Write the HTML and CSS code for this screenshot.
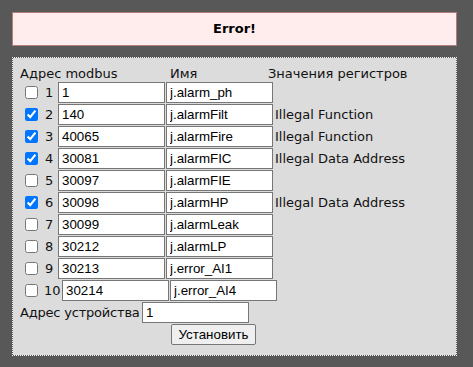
FILE: index.html
```html
<!DOCTYPE html>
<html>
<head>
<meta charset="utf-8">
<link rel="stylesheet" href="styles.css">
</head>
<body>
<div class="error">Error!</div>
<form class="panel">
  <div class="head">
    <span class="h1">Адрес modbus</span>
    <span class="h2">Имя</span>
    <span class="h3">Значения регистров</span>
  </div>
  <div class="row"><input type="checkbox" class="cb"><span class="num">1</span><input class="tx" value="1"><input class="tx" value="j.alarm_ph"><span class="val"></span></div>
  <div class="row"><input type="checkbox" class="cb" checked><span class="num">2</span><input class="tx" value="140"><input class="tx" value="j.alarmFilt"><span class="val">Illegal Function</span></div>
  <div class="row"><input type="checkbox" class="cb" checked><span class="num">3</span><input class="tx" value="40065"><input class="tx" value="j.alarmFire"><span class="val">Illegal Function</span></div>
  <div class="row"><input type="checkbox" class="cb" checked><span class="num">4</span><input class="tx" value="30081"><input class="tx" value="j.alarmFIC"><span class="val">Illegal Data Address</span></div>
  <div class="row"><input type="checkbox" class="cb"><span class="num">5</span><input class="tx" value="30097"><input class="tx" value="j.alarmFIE"><span class="val"></span></div>
  <div class="row"><input type="checkbox" class="cb" checked><span class="num">6</span><input class="tx" value="30098"><input class="tx" value="j.alarmHP"><span class="val">Illegal Data Address</span></div>
  <div class="row"><input type="checkbox" class="cb"><span class="num">7</span><input class="tx" value="30099"><input class="tx" value="j.alarmLeak"><span class="val"></span></div>
  <div class="row"><input type="checkbox" class="cb"><span class="num">8</span><input class="tx" value="30212"><input class="tx" value="j.alarmLP"><span class="val"></span></div>
  <div class="row"><input type="checkbox" class="cb"><span class="num">9</span><input class="tx" value="30213"><input class="tx" value="j.error_AI1"><span class="val"></span></div>
  <div class="row"><input type="checkbox" class="cb"><span class="num wide">10</span><input class="tx" value="30214"><input class="tx" value="j.error_AI4"><span class="val"></span></div>
  <div class="row dev"><span class="devlabel">Адрес устройства</span><input class="tx" value="1"></div>
  <div class="btnrow"><button type="button" class="btn">Установить</button></div>
</form>
</body>
</html>
```
FILE: styles.css
```css
html, body {
  margin: 0;
  padding: 0;
}
body {
  background: #585858;
  padding: 12px 16px 12px 12px;
  font-family: "DejaVu Sans", Verdana, sans-serif;
  font-size: 13px;
  color: #111;
}
.error {
  box-sizing: border-box;
  width: 445px;
  height: 34px;
  background: #ffeded;
  border: 1px solid #b07c7c;
  font-weight: bold;
  font-size: 13px;
  text-align: center;
  line-height: 32px;
  color: #000;
}
.panel {
  box-sizing: border-box;
  width: 445px;
  margin: 11px 0 0 0;
  padding: 8px 7px 10px 7px;
  background: #dcdcdc;
  background-clip: padding-box;
  border: 1px dotted #f2f2f2;
}
.head {
  display: flex;
  height: 16px;
  line-height: 16px;
}
.h1 { width: 150px; }
.h2 { width: 98px; }
.row {
  display: flex;
  align-items: center;
  height: 21px;
  margin-bottom: 1px;
}
.cb {
  margin: 0 3px 0 5px;
  width: 13px;
  height: 13px;
}
.num {
  box-sizing: border-box;
  padding-left: 4px;
  width: 17px;
}
.num.wide { width: 21px; padding-left: 3px; }
.tx {
  box-sizing: border-box;
  width: 107px;
  height: 21px;
  margin: 0 1px 0 0;
  padding: 1px 3px;
  border: 1px solid #767676;
  background: #fff;
  font-family: "Liberation Sans", Arial, sans-serif;
  font-size: 13.33px;
  color: #000;
}
.val {
  padding-left: 1px;
}
.devlabel {
  flex: 0 0 122px;
  white-space: nowrap;
  overflow: visible;
  letter-spacing: -0.2px;
}
.btnrow {
  display: flex;
  height: 21px;
}
.btn {
  box-sizing: border-box;
  margin-left: 151px;
  width: 85px;
  height: 21px;
  padding: 0;
  background: #efefef;
  border: 1px solid #767676;
  border-radius: 2px;
  font-family: "Liberation Sans", Arial, sans-serif;
  font-size: 13.33px;
  color: #000;
}
```
